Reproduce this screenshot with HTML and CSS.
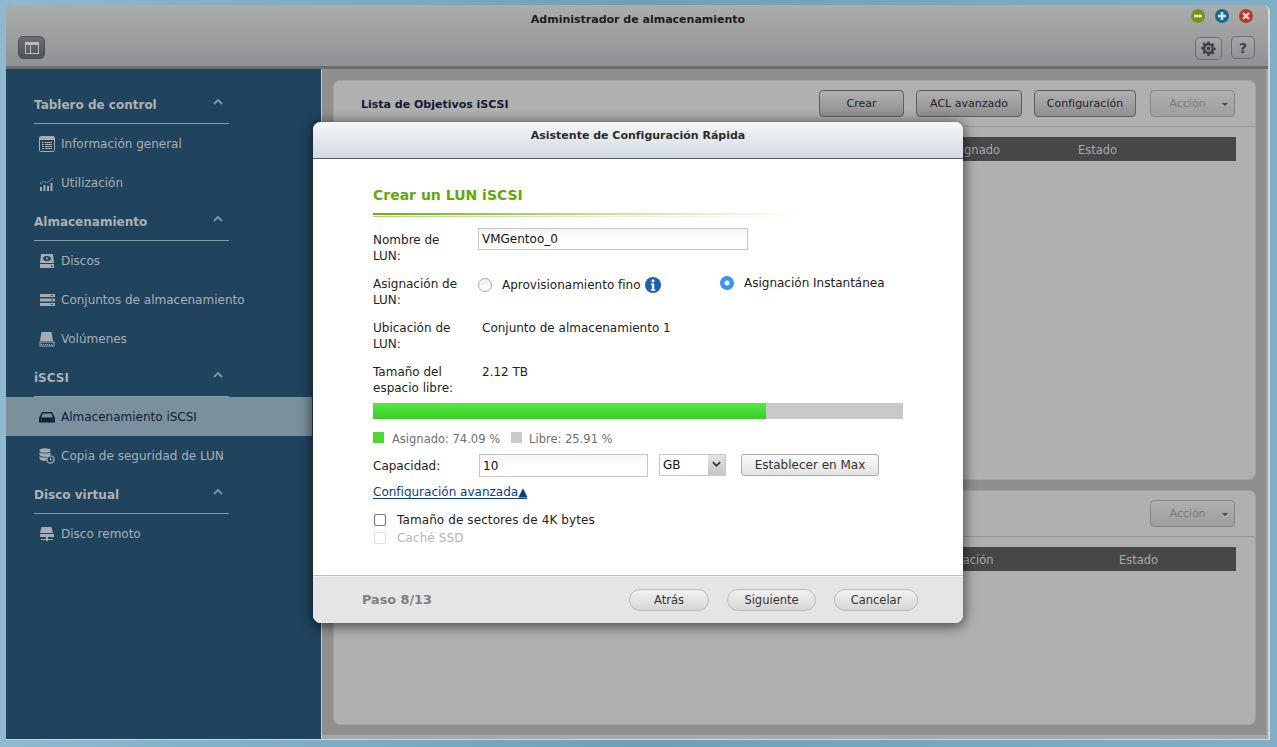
FILE: index.html
```html
<!DOCTYPE html>
<html lang="es">
<head>
    <meta charset="UTF-8">
    <title>Administrador de almacenamiento</title>
    <link rel="stylesheet" href="styles.css">
</head>
<body>
    <div class="window">
        <header class="titlebar">
            <div class="title">Administrador de almacenamiento</div>
            <div class="win-controls">
                <span class="dot dot-min"><svg viewBox="0 0 14 14"><rect x="3" y="5.7" width="8" height="2.6" fill="#dfe8c8"/></svg></span>
                <span class="dot dot-max"><svg viewBox="0 0 14 14"><path d="M5.7 3h2.6v2.7H11v2.6H8.300V11H5.700V8.300H3V5.700h2.700z" fill="#cfe3ee"/></svg></span>
                <span class="dot dot-close"><svg viewBox="0 0 14 14"><path d="M4 4l6 6M10 4l-6 6" stroke="#f0d6d0" stroke-width="2.200"/></svg></span>
            </div>
            <div class="toolbar">
                <button class="tool-toggle"><svg viewBox="0 0 14 14" width="14" height="14"><rect x="0.500" y="1.500" width="13" height="11" fill="none" stroke="#b9bcc0"/><rect x="0" y="1" width="14" height="3" fill="#b9bcc0"/><rect x="5" y="3" width="1" height="9" fill="#b9bcc0"/></svg></button>
                <div class="tool-right">
                    <button class="tool-btn"><svg viewBox="0 0 20 20" width="15" height="15"><path d="M8.500 1h3l.5 2.600 1.600.7 2.200-1.500 2.100 2.100-1.500 2.200.7 1.600 2.600.5v3l-2.600.5-.7 1.600 1.500 2.200-2.100 2.100-2.200-1.500-1.600.7-.5 2.600h-3L8 16.900l-1.600-.7-2.200 1.500-2.100-2.100 1.500-2.200-.7-1.600L.3 11.300v-3l2.600-.5.7-1.600-1.500-2.200 2.100-2.100 2.200 1.500L8 3.600z" fill="#3f4245" transform="translate(0 -.2)"/><circle cx="10" cy="10" r="4.300" fill="#8a8d90"/><circle cx="10" cy="10" r="2.300" fill="#3f4245"/></svg></button>
                    <button class="tool-btn help">?</button>
                </div>
            </div>
        </header>

        <div class="workspace">
            <nav class="sidebar">
                <div class="nav-head">Tablero de control<svg class="chev" viewBox="0 0 10 6"><path d="M1 5l4-4 4 4" fill="none" stroke="#6d9aa3" stroke-width="2"/></svg></div>
                <a class="nav-item"><svg viewBox="0 0 16 16"><rect x=".5" y=".5" width="15" height="15" rx="1" fill="none" stroke="#a5acb2"/><rect x="1" y="1" width="14" height="3" fill="#a5acb2"/><path d="M3 6.500h2M3 8.500h2M3 10.500h2M3 12.500h2M6 6.500h7M6 8.500h7M6 10.500h7M6 12.500h7" stroke="#a5acb2"/></svg>Información general</a>
                <a class="nav-item"><svg viewBox="0 0 16 16"><path d="M1 12h2v4H1zM4.500 10h2v6h-2zM8 11h2v5H8zM11.500 8h2v8h-2z" fill="#a5acb2"/><path d="M1 9l4-3 3 2 6-5" fill="none" stroke="#a5acb2" stroke-dasharray="2 1"/></svg>Utilización</a>

                <div class="nav-head">Almacenamiento<svg class="chev" viewBox="0 0 10 6"><path d="M1 5l4-4 4 4" fill="none" stroke="#6d9aa3" stroke-width="2"/></svg></div>
                <a class="nav-item"><svg viewBox="0 0 16 16"><path d="M2 1h12l1 9H1z" fill="#a5acb2"/><ellipse cx="8" cy="5.500" rx="4" ry="2.500" fill="#20435e"/><circle cx="8" cy="5.500" r="1" fill="#a5acb2"/><rect x="1" y="11" width="14" height="4" fill="#a5acb2"/><rect x="12" y="12.500" width="1.500" height="1.500" fill="#20435e"/></svg>Discos</a>
                <a class="nav-item"><svg viewBox="0 0 16 16"><path d="M1 2h15v3H1zM1 6.500h15v3H1zM1 11h15v3H1z" fill="#a5acb2"/><path d="M12 3.500h2M12 8h2M12 12.500h2" stroke="#20435e"/></svg>Conjuntos de almacenamiento</a>
                <a class="nav-item"><svg viewBox="0 0 16 16"><path d="M2.500 1h10L14 10H1z" fill="#a5acb2"/><rect x="1" y="11" width="14" height="4" fill="none" stroke="#a5acb2"/><path d="M2 13.500h12" stroke="#a5acb2" stroke-dasharray="1 1"/></svg>Volúmenes</a>

                <div class="nav-head">iSCSI<svg class="chev" viewBox="0 0 10 6"><path d="M1 5l4-4 4 4" fill="none" stroke="#6d9aa3" stroke-width="2"/></svg></div>
                <a class="nav-item active"><svg viewBox="0 0 16 16"><path d="M3 3h10l3 6v4.500H0V9z" fill="#0c2238"/><path d="M3.800 4.500h8.400L14 8.500H2z" fill="#7a909c"/><path d="M2 11h1M13 11h1" stroke="#7a909c"/></svg>Almacenamiento iSCSI</a>
                <a class="nav-item"><svg viewBox="0 0 16 16"><ellipse cx="6" cy="2.500" rx="5.500" ry="2.300" fill="#a5acb2"/><path d="M.5 4v2.500C.5 8 3 9 6 9s5.500-1 5.500-2.500V4C11 6 1 6 .5 4zM.5 8v2.500C.5 12 3 13 6.500 13L8 9.500C5 10 1 9.500.5 8z" fill="#a5acb2"/><circle cx="11.500" cy="11.500" r="3.700" fill="none" stroke="#a5acb2" stroke-width="1.300"/><path d="M11.500 9.500v2.500h2" fill="none" stroke="#a5acb2"/></svg>Copia de seguridad de LUN</a>

                <div class="nav-head">Disco virtual<svg class="chev" viewBox="0 0 10 6"><path d="M1 5l4-4 4 4" fill="none" stroke="#6d9aa3" stroke-width="2"/></svg></div>
                <a class="nav-item"><svg viewBox="0 0 16 16"><path d="M2.500 1h10L14 7H1z" fill="#a5acb2"/><rect x="1" y="8" width="14" height="3" fill="#a5acb2"/><path d="M7 11h2v2h5v1H9v1H7v-1H2v-1h5z" fill="#a5acb2"/></svg>Disco remoto</a>
            </nav>

            <main class="content">
                <section class="panel panel-top">
                    <div class="panel-head">
                        <h2>Lista de Objetivos iSCSI</h2>
                        <div class="actions">
                            <button class="btn btn-crear">Crear</button>
                            <button class="btn btn-acl">ACL avanzado</button>
                            <button class="btn btn-conf">Configuración</button>
                            <button class="btn btn-action">Acción<span class="caret"></span></button>
                        </div>
                    </div>
                    <div class="table-head th-top"><span>Asignado</span><span>Estado</span></div>
                </section>
                <section class="panel panel-bottom">
                    <div class="panel-head">
                        <h2></h2>
                        <div class="actions">
                            <button class="btn btn-action">Acción<span class="caret"></span></button>
                        </div>
                    </div>
                    <div class="table-head th-bottom"><span>Asignación</span><span>Estado</span></div>
                </section>
            </main>
        </div>
    </div>

    <div class="modal">
        <div class="modal-head">Asistente de Configuración Rápida</div>
        <div class="modal-body">
            <h3>Crear un LUN iSCSI</h3>
            <div class="rule"></div>

            <div class="form-row">
                <label>Nombre de LUN:</label>
                <input class="text-input name-input" type="text" value="VMGentoo_0">
            </div>
            <div class="form-row">
                <label>Asignación de LUN:</label>
                <div class="radios">
                    <span class="radio-opt opt-thin"><span class="radio"></span>Aprovisionamiento fino
                        <svg class="info" viewBox="0 0 16 16" width="16" height="16"><circle cx="8" cy="8" r="8" fill="#1a62ad"/><circle cx="8" cy="3.800" r="1.600" fill="#fff"/><path d="M5.800 6.500h3.400v5.700h1.100v1.500H5.800v-1.500h1.100V8H5.800z" fill="#fff"/></svg>
                    </span>
                    <span class="radio-opt opt-instant"><span class="radio on"></span>Asignación Instantánea</span>
                </div>
            </div>
            <div class="form-row">
                <label>Ubicación de LUN:</label>
                <div class="value">Conjunto de almacenamiento 1</div>
            </div>
            <div class="form-row">
                <label>Tamaño del espacio libre:</label>
                <div class="value">2.12 TB</div>
            </div>

            <div class="usage"><div class="usage-fill" style="width: 74.09%"></div></div>
            <div class="legend">
                <span class="swatch green"></span><span class="legend-a">Asignado: 74.09 %</span>
                <span class="swatch grey"></span><span>Libre: 25.91 %</span>
            </div>

            <div class="capacity">
                <label>Capacidad:</label>
                <input class="text-input cap-input" type="text" value="10">
                <div class="unit-select">GB<span class="unit-arrow"><svg viewBox="0 0 10 6" width="9" height="6"><path d="M1 1l4 4 4-4" fill="none" stroke="#333" stroke-width="2"/></svg></span></div>
                <button class="btn-max">Establecer en Max</button>
            </div>

            <a class="adv-link">Configuración avanzada▲</a>
            <div class="check-row"><span class="check"></span>Tamaño de sectores de 4K bytes</div>
            <div class="check-row disabled"><span class="check"></span>Caché SSD</div>
        </div>
        <div class="modal-foot">
            <span class="step">Paso 8/13</span>
            <div class="foot-btns">
                <button class="pill pill-back">Atrás</button>
                <button class="pill pill-next">Siguiente</button>
                <button class="pill pill-cancel">Cancelar</button>
            </div>
        </div>
    </div>
</body>
</html>
```

FILE: styles.css
```css
* {
    box-sizing: border-box;
}

html, body {
    height: 100%;
}

body {
    margin: 0;
    overflow: hidden;
    font-family: "DejaVu Sans", Verdana, sans-serif;
    font-size: 12px;
    color: #222;
    background: linear-gradient(90deg, #8fb9cf, #6fa0b8 50%, #7fb0c8);
    padding: 5px 7px 7px 6px;
}

button {
    font-family: inherit;
}

.window {
    height: 735px;
    display: flex;
    flex-direction: column;
    border-radius: 6px 6px 0 0;
    border-right: 2px solid #d4d6d6;
    border-bottom: 1px solid #d4d6d6;
    overflow: hidden;
    background: #8f8f8f;
}

.titlebar {
    height: 64px;
    flex: none;
    position: relative;
    background: linear-gradient(#acacab, #8f9295);
    border-bottom: 3px solid #6e6e6e;
}

.title {
    text-align: center;
    font-weight: bold;
    font-size: 11px;
    color: #1c1c1c;
    padding: 8px 0 0 2px;
    line-height: 14px;
}

.win-controls {
    position: absolute;
    top: 4px;
    right: 15px;
    display: flex;
    gap: 10px;
}

.dot {
    width: 14px;
    height: 14px;
    border-radius: 50%;
    display: block;
}

.dot svg {
    display: block;
}

.dot-min { background: #71951b; }
.dot-max { background: #16688f; }
.dot-close { background: #b53a28; }

.toolbar {
    display: flex;
    justify-content: space-between;
    padding: 9px 13px 0 12px;
}

.tool-toggle {
    width: 27px;
    height: 23px;
    padding: 0;
    border: 1px solid #4c5055;
    border-radius: 5px;
    background: linear-gradient(#6b6f75, #4f5359);
    display: flex;
    align-items: center;
    justify-content: center;
}

.tool-right {
    display: flex;
    gap: 9px;
    margin-top: 1px;
}

.tool-btn {
    width: 27px;
    height: 23px;
    padding: 0;
    border: 1px solid #6a6c6f;
    border-radius: 5px;
    background: linear-gradient(#a6a7a8, #909294);
    display: flex;
    align-items: center;
    justify-content: center;
}

.help {
    width: 24px;
    font-size: 14px;
    font-weight: bold;
    color: #3f4245;
    margin-top: -1px;
}

.workspace {
    flex: 1;
    display: flex;
    min-height: 0;
}

.sidebar {
    width: 316px;
    flex: none;
    background: #20435e;
    padding-top: 16px;
    border-right: 1px solid #c8c8c8;
}

.nav-head {
    height: 39px;
    margin-left: 28px;
    width: 195px;
    border-bottom: 1px solid #7d9fa9;
    font-weight: bold;
    font-size: 12px;
    color: #aeb1b2;
    line-height: 40px;
    position: relative;
}

.chev {
    position: absolute;
    right: 6px;
    top: 14px;
    width: 10px;
    height: 6px;
}

.nav-item {
    display: flex;
    align-items: center;
    height: 39px;
    padding-left: 33px;
    color: #aab0b4;
    margin-right: 9px;
}

.nav-item svg {
    width: 16px;
    height: 16px;
    margin-right: 6px;
    flex: none;
}

.nav-item.active {
    background: #7a909c;
    color: #0c1f33;
}

.content {
    flex: 1;
    min-width: 0;
    padding: 11px 10px 10px 11px;
    display: flex;
    flex-direction: column;
    gap: 10px;
    border-right: 2px solid #a3a3a3;
    border-bottom: 4px solid #a8a8a8;
}

.panel {
    background: #b0b0b0;
    border: 1px solid #a2a2a2;
    border-radius: 7px;
}

.panel-top {
    height: 400px;
}

.panel-bottom {
    flex: 1;
}

.panel-head {
    height: 46px;
    display: flex;
    align-items: flex-start;
    justify-content: space-between;
    padding: 9px 20px 0 27px;
    border-bottom: 1px solid #979797;
}

.panel-head h2 {
    margin: 0;
    font-size: 11px;
    line-height: 29px;
    font-weight: bold;
    color: #0e1b33;
}

.actions {
    display: flex;
    gap: 12px;
}

.btn {
    height: 27px;
    padding: 0;
    border: 1px solid #5f5f5f;
    border-radius: 4px;
    background: linear-gradient(#b0b0b0, #8f8f8f);
    font-size: 11px;
    color: #222;
}

.btn-crear { width: 85px; }
.btn-acl { width: 106px; }
.btn-conf { width: 102px; }

.btn-action {
    width: 85px;
    margin-left: 2px;
    border-color: #868686;
    background: linear-gradient(#b0b0b0, #9e9e9e);
    color: #7a7a7a;
    position: relative;
    padding-right: 10px;
}

.caret {
    position: absolute;
    right: 6px;
    top: 12px;
    border: 3px solid transparent;
    border-top-color: #444;
    border-bottom: 0;
}

.table-head {
    height: 24px;
    margin: 10px 19px 0 13px;
    background: #474747;
    color: #a9a9a9;
    font-size: 11.500px;
    line-height: 26px;
    position: relative;
}

.table-head span {
    position: absolute;
}

.th-top span:first-child { left: 600px; }
.th-top span:last-child { left: 731px; }
.th-bottom span:first-child { left: 584px; }
.th-bottom span:last-child { left: 772px; }

/* wizard dialog */
.modal {
    position: absolute;
    left: 313px;
    top: 122px;
    width: 650px;
    height: 501px;
    display: flex;
    flex-direction: column;
    border-radius: 8px;
    background: #fff;
    box-shadow: 0 2px 12px 2px rgba(0, 0, 0, .55);
    overflow: hidden;
}

.modal-head {
    height: 37px;
    flex: none;
    text-align: center;
    font-weight: bold;
    font-size: 11px;
    line-height: 28px;
    color: #2c2c2c;
    background: linear-gradient(#f5f7f8, #d2d9e0);
    border-bottom: 1px solid #555c62;
}

.modal-body {
    flex: 1;
    padding: 27px 60px 0;
}

.modal-body h3 {
    margin: 0;
    font-size: 14px;
    line-height: 18px;
    font-weight: bold;
    color: #62a80c;
}

.rule {
    height: 4px;
    margin: 9px 0 15px;
    width: 430px;
    background:
        linear-gradient(90deg, #6cae10, #c8e19c 55%, #fff) top / 100% 2px no-repeat,
        linear-gradient(90deg, #b4d67e, #e2f0cc 55%, #fff) bottom / 100% 1px no-repeat;
}

.form-row {
    display: flex;
    height: 32px;
    margin-bottom: 12px;
    line-height: 16px;
    color: #222;
}

.form-row label {
    width: 105px;
    flex: none;
    padding-right: 8px;
}

.text-input {
    border: 1px solid #c6c6c6;
    padding: 2px 3px;
    font-family: inherit;
    font-size: 12px;
    color: #111;
    background: linear-gradient(#f3f4f4, #fff 50%);
    outline: none;
}

.name-input {
    width: 270px;
    height: 22px;
    margin-top: -4px;
}

.radios {
    position: relative;
    flex: 1;
}

.radio-opt {
    position: absolute;
    display: flex;
    align-items: center;
    white-space: nowrap;
}

.opt-thin { left: 0; top: 1px; }
.opt-instant { left: 242px; top: -1px; }

.radio {
    width: 14px;
    height: 14px;
    border-radius: 50%;
    border: 1px solid #aaa;
    background: linear-gradient(#eee, #fff);
    margin-right: 10px;
    flex: none;
}

.radio.on {
    border: 0;
    background: radial-gradient(circle, #fff 0 2px, #3b94ee 3px);
}

.info {
    margin-left: 4px;
}

.value {
    padding-left: 4px;
}

.usage {
    height: 16px;
    margin-top: -5px;
    background: #c9c9c9;
}

.usage-fill {
    height: 100%;
    background: linear-gradient(#52ec3e, #3ecb2b);
}

.legend {
    display: flex;
    align-items: center;
    height: 16px;
    margin-top: 12px;
    color: #6f6f6f;
    font-size: 11.500px;
}

.swatch {
    width: 11px;
    height: 11px;
    margin-right: 8px;
    margin-top: -4px;
}

.swatch.green { background: #4fd92e; }
.swatch.grey { background: #cacaca; margin-right: 7px; }

.legend-a {
    margin-right: 11px;
}

.capacity {
    display: flex;
    align-items: flex-start;
    margin-top: 7px;
}

.capacity label {
    width: 106px;
    flex: none;
    padding-top: 5px;
}

.cap-input {
    width: 169px;
    height: 23px;
}

.unit-select {
    width: 67px;
    height: 22px;
    margin-left: 11px;
    border: 1px solid #c6c6c6;
    padding-left: 3px;
    line-height: 21px;
    color: #111;
    display: flex;
    justify-content: space-between;
}

.unit-arrow {
    width: 17px;
    background: linear-gradient(#e4e4e4, #c4c4c4);
    display: flex;
    align-items: center;
    justify-content: center;
    padding-bottom: 3px;
}

.btn-max {
    width: 138px;
    height: 22px;
    margin-left: 15px;
    padding: 0;
    border: 1px solid #aaa;
    border-radius: 3px;
    background: linear-gradient(#fafafa, #e2e2e2);
    font-size: 12px;
    color: #333;
}

.adv-link {
    display: inline-block;
    margin-top: 7px;
    line-height: 16px;
    color: #0b3b82;
    border-bottom: 1px solid #0b3b82;
    height: 15px;
}

.check-row {
    display: flex;
    align-items: center;
    height: 18px;
    color: #222;
    letter-spacing: .1px;
}

.adv-link + .check-row {
    margin-top: 12px;
}

.check {
    width: 12px;
    height: 12px;
    margin: 0 11px 0 1px;
    border: 1px solid #777;
    border-radius: 2px;
    background: #fff;
}

.check-row.disabled {
    color: #b4b4b4;
}

.check-row.disabled .check {
    border-color: #ddd;
}

.modal-foot {
    height: 48px;
    flex: none;
    display: flex;
    align-items: center;
    justify-content: space-between;
    padding: 0 45px 0 49px;
    background: #e5e5e5;
    border-top: 1px solid #bdbdbd;
    box-shadow: inset 0 1px 0 #f4f4f4;
}

.step {
    font-weight: bold;
    font-size: 12.800px;
    color: #7f7f7f;
}

.foot-btns {
    display: flex;
    gap: 18px;
}

.pill {
    height: 22px;
    padding: 0;
    border: 1px solid #bbb;
    border-radius: 11px;
    background: linear-gradient(#f2f2f2, #d6d6d6);
    font-size: 11.500px;
    color: #333;
}

.pill-back { width: 80px; }
.pill-next { width: 89px; }
.pill-cancel { width: 84px; }
```
